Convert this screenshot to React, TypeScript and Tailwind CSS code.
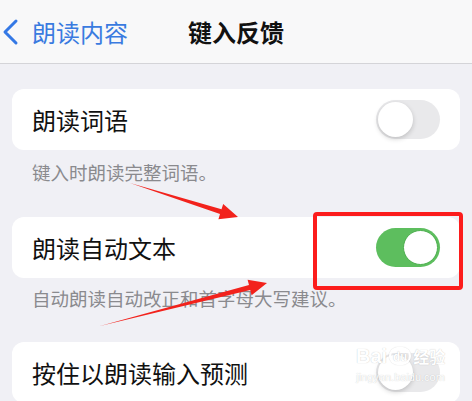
import React from "react";

const Toggle: React.FC<{ on?: boolean }> = ({ on }) => (
  <div
    className={
      on
        ? "w-[64px] h-[39px] rounded-full bg-[#5dbe5e] flex items-center justify-end px-[2px]"
        : "w-[64px] h-[39px] rounded-full bg-[#e9e9eb] flex items-center justify-start px-[2px]"
    }
  >
    <div
      className={
        on
          ? "w-[35px] h-[35px] rounded-full bg-white border border-[#4caf4e]"
          : "w-[35px] h-[35px] rounded-full bg-white shadow-[0_2px_5px_rgba(0,0,0,0.18)]"
      }
    />
  </div>
);

const Row: React.FC<{ label: string; on?: boolean }> = ({ label, on }) => (
  <div className="h-[61px] rounded-[12px] bg-white flex items-center justify-between pl-[20px] pr-[20px]">
    <span className="text-[24px] text-[#111] leading-none">{label}</span>
    <Toggle on={on} />
  </div>
);

export default function App() {
  return (
    <div
      className="relative w-[472px] h-[401px] overflow-hidden bg-[#f0f0f5]"
      style={{ fontFamily: '"Noto Sans CJK SC", "Noto Sans", sans-serif' }}
    >
      <div className="h-[64px] bg-[#f8f8f9] border-b border-[#d4d4d8] flex items-center">
        <div className="flex items-center w-[188px]">
          <svg width="28" height="30" viewBox="0 0 28 30">
            <polyline
              points="16,4 5,15 16,26"
              fill="none"
              stroke="#3478e5"
              strokeWidth="3"
              strokeLinecap="round"
              strokeLinejoin="round"
            />
          </svg>
          <span className="ml-[4px] text-[24px] text-[#3a7be0] leading-none">朗读内容</span>
        </div>
        <span className="text-[24px] font-bold text-[#111] leading-none">键入反馈</span>
      </div>

      <div className="px-[12px] pt-[25px]">
        <Row label="朗读词语" />
        <p className="pl-[20px] pt-[10px] text-[18.5px] leading-[24px] text-[#8a8a8e]">
          键入时朗读完整词语。
        </p>
        <div className="mt-[33px]">
          <Row label="朗读自动文本" on />
        </div>
        <p className="pl-[20px] pt-[8px] text-[18.5px] leading-[24px] text-[#8a8a8e]">
          自动朗读自动改正和首字母大写建议。
        </p>
        <div className="mt-[32px]">
          <Row label="按住以朗读输入预测" />
        </div>
      </div>

      {/* annotation box */}
      <div className="absolute left-[313px] top-[212px] w-[150px] h-[78px] border-[4px] border-[#fc1c1c] rounded-[4px]" />

      {/* annotation arrows */}
      <svg className="absolute left-0 top-0" width="472" height="401" viewBox="0 0 472 401">
        <polygon
          points="130,183 221.5,209.2 223.2,204 238,217 218.4,219.2 220,214"
          fill="#f2221c"
        />
        <polygon
          points="100,326 249,285.1 247.6,279.7 267,283 251.6,295.2 250.2,289.9"
          fill="#f2221c"
        />
      </svg>

      {/* watermark */}
      <div className="absolute left-[356px] top-[346px] flex flex-col items-center leading-none text-white [text-shadow:0_0_1px_rgba(0,0,0,0.25)]">
        <div className="flex items-center gap-[2px]">
          <span className="text-[20px] font-bold" style={{ fontFamily: '"Liberation Sans", sans-serif' }}>
            Bai
          </span>
          <span className="w-[22px] h-[18px] rounded-full border-2 border-white text-[11px] font-bold flex items-center justify-center shadow-[0_0_1px_rgba(0,0,0,0.25)]">
            du
          </span>
          <span className="text-[16px] font-bold">经验</span>
        </div>
        <span className="mt-[6px] text-[11px]" style={{ fontFamily: '"Liberation Sans", sans-serif' }}>
          jingyan.baidu.com
        </span>
      </div>
    </div>
  );
}
